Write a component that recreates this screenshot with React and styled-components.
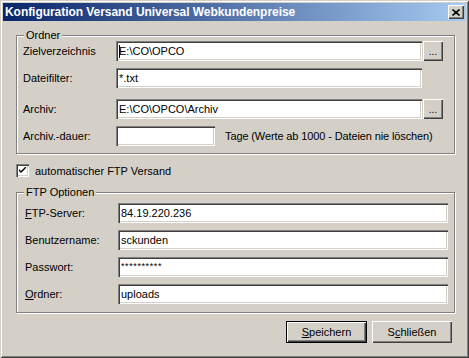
import styled, { createGlobalStyle } from 'styled-components';

const GlobalStyle = createGlobalStyle`
  html, body {
    margin: 0;
    padding: 0;
    background: #d4d0c8;
  }
  body {
    font-family: "Liberation Sans", Arial, sans-serif;
    font-size: 11px;
    color: #000;
  }
`;

const Frame = styled.div`
  width: 469px;
  height: 358px;
  box-sizing: border-box;
  padding: 3px;
  background: #d4d0c8;
  box-shadow: inset 1px 1px #d4d0c8, inset -1px -1px #404040,
    inset 2px 2px #fff, inset -2px -2px #808080;
  display: flex;
  flex-direction: column;
`;

const TitleBar = styled.div`
  height: 18px;
  display: flex;
  align-items: center;
  justify-content: space-between;
  padding: 0 2px;
  background: linear-gradient(to right, #0a246a, #a6caf0);
`;

const Title = styled.span`
  color: #fff;
  font-weight: bold;
  font-size: 12px;
  letter-spacing: -0.05px;
  white-space: nowrap;
`;

const CloseButton = styled.div`
  width: 16px;
  height: 14px;
  box-sizing: border-box;
  display: flex;
  align-items: center;
  justify-content: center;
  background: #d4d0c8;
  box-shadow: inset 1px 1px #fff, inset -1px -1px #404040, inset -2px -2px #808080;
`;

const Body = styled.div`
  flex: 1;
  display: flex;
  flex-direction: column;
  padding: 14px 11px 0 13px;
`;

const GroupBox = styled.div`
  position: relative;
  border: 1px solid #808080;
  box-shadow: inset 1px 1px #fff, 1px 1px #fff;
  margin-top: ${p => p.$top || 0}px;
  padding: ${p => p.$pad};
  display: flex;
  flex-direction: column;
`;

const GroupTitle = styled.span`
  position: absolute;
  top: -7px;
  left: 7px;
  padding: 0 2px;
  line-height: 13px;
  background: #d4d0c8;
`;

const Row = styled.div`
  display: grid;
  grid-template-columns: ${p => p.$cols};
  column-gap: 1px;
  align-items: center;
  height: ${p => p.$h || 20}px;
  margin-top: ${p => p.$gap || 0}px;
`;

const Label = styled.span`
  white-space: nowrap;
  letter-spacing: ${p => p.$tight ? '-0.12px' : 'normal'};
`;

const Key = styled.span`
  text-decoration: underline;
`;

const Field = styled.div`
  position: relative;
  height: 100%;
  width: ${p => (p.$w ? `${p.$w}px` : 'auto')};
  box-sizing: border-box;
  background: #fff;
  padding: ${p => (p.$secret ? '4px 3px 0' : '0 3px')};
  display: flex;
  align-items: ${p => (p.$secret ? 'flex-start' : 'center')};
  font-size: ${p => (p.$secret ? '9px' : '11px')};
  letter-spacing: ${p => (p.$secret ? '0.6px' : 'normal')};
  white-space: nowrap;
  overflow: hidden;
  box-shadow: inset 1px 1px #808080, inset 2px 2px #404040,
    inset -1px -1px #fff, inset -2px -2px #d4d0c8;

  ${p => p.$caret && `
    &::before {
      content: '';
      position: absolute;
      left: 3px;
      top: 4px;
      width: 1px;
      height: 13px;
      background: #000;
    }
  `}
`;

const BrowseButton = styled.div`
  height: 100%;
  box-sizing: border-box;
  background: #d4d0c8;
  display: flex;
  align-items: flex-end;
  justify-content: center;
  padding-bottom: 5px;
  font-size: 10px;
  line-height: 8px;
  box-shadow: inset 1px 1px #fff, inset -1px -1px #404040, inset -2px -2px #808080;
`;

const DurationRow = styled.div`
  display: flex;
  align-items: center;
  gap: 10px;
  height: 20px;
`;

const CheckRow = styled.div`
  display: flex;
  align-items: center;
  gap: 6px;
  margin-top: 10px;
  height: 13px;
`;

const CheckBox = styled.div`
  width: 13px;
  height: 13px;
  box-sizing: border-box;
  background: #fff;
  display: flex;
  align-items: center;
  justify-content: center;
  box-shadow: inset 1px 1px #808080, inset 2px 2px #404040,
    inset -1px -1px #fff, inset -2px -2px #d4d0c8;
`;

const ButtonBar = styled.div`
  display: flex;
  justify-content: flex-end;
  gap: 5px;
  margin-top: 8px;
  padding-right: 3px;
`;

const Button = styled.div`
  width: ${p => p.$w}px;
  height: 22px;
  box-sizing: border-box;
  display: flex;
  align-items: center;
  justify-content: center;
  background: #d4d0c8;
  border: ${p => (p.$default ? '1px solid #000' : 'none')};
  box-shadow: inset 1px 1px #fff, inset -1px -1px #404040, inset -2px -2px #808080;
`;

const App = () => (
  <>
    <GlobalStyle />
    <Frame>
      <TitleBar>
        <Title>Konfiguration Versand Universal Webkundenpreise</Title>
        <CloseButton>
          <svg width="8" height="7" viewBox="0 0 8 7">
            <path d="M0.5 0.5 L7.5 6.5 M7.5 0.5 L0.5 6.5" stroke="#000" strokeWidth="1.6" />
          </svg>
        </CloseButton>
      </TitleBar>

      <Body>
        <GroupBox $pad="5px 11px 7px 6px">
          <GroupTitle>Ordner</GroupTitle>
          <Row $cols="92px 1fr 20px">
            <Label>Zielverzeichnis</Label>
            <Field $caret>E:\CO\OPCO</Field>
            <BrowseButton>...</BrowseButton>
          </Row>
          <Row $cols="92px 1fr 20px" $gap={7}>
            <Label>Dateifilter:</Label>
            <Field>*.txt</Field>
            <span />
          </Row>
          <Row $cols="92px 1fr 20px" $gap={11}>
            <Label>Archiv:</Label>
            <Field>E:\CO\OPCO\Archiv</Field>
            <BrowseButton>...</BrowseButton>
          </Row>
          <Row $cols="92px 1fr" $gap={7}>
            <Label>Archiv.-dauer:</Label>
            <DurationRow>
              <Field $w={99} />
              <Label $tight>Tage (Werte ab 1000 - Dateien nie löschen)</Label>
            </DurationRow>
          </Row>
        </GroupBox>

        <CheckRow>
          <CheckBox>
            <svg width="7" height="7" viewBox="0 0 7 7">
              <path d="M0 2 L0 4 L2 6 L7 1 L7 -1 L2 4 Z" fill="#000" />
            </svg>
          </CheckBox>
          <Label>automatischer FTP Versand</Label>
        </CheckRow>

        <GroupBox $top={15} $pad="10px 6px 8px 8px">
          <GroupTitle>FTP Optionen</GroupTitle>
          <Row $cols="92px 1fr">
            <Label><Key>F</Key>TP-Server:</Label>
            <Field>84.19.220.236</Field>
          </Row>
          <Row $cols="92px 1fr" $gap={7}>
            <Label>Benutzername:</Label>
            <Field>sckunden</Field>
          </Row>
          <Row $cols="92px 1fr" $gap={7}>
            <Label>Passwort:</Label>
            <Field $secret>**********</Field>
          </Row>
          <Row $cols="92px 1fr" $gap={7}>
            <Label><Key>O</Key>rdner:</Label>
            <Field>uploads</Field>
          </Row>
        </GroupBox>

        <ButtonBar>
          <Button $w={81} $default><span><Key>S</Key>peichern</span></Button>
          <Button $w={80}><span>S<Key>c</Key>hließen</span></Button>
        </ButtonBar>
      </Body>
    </Frame>
  </>
);

export default App;
